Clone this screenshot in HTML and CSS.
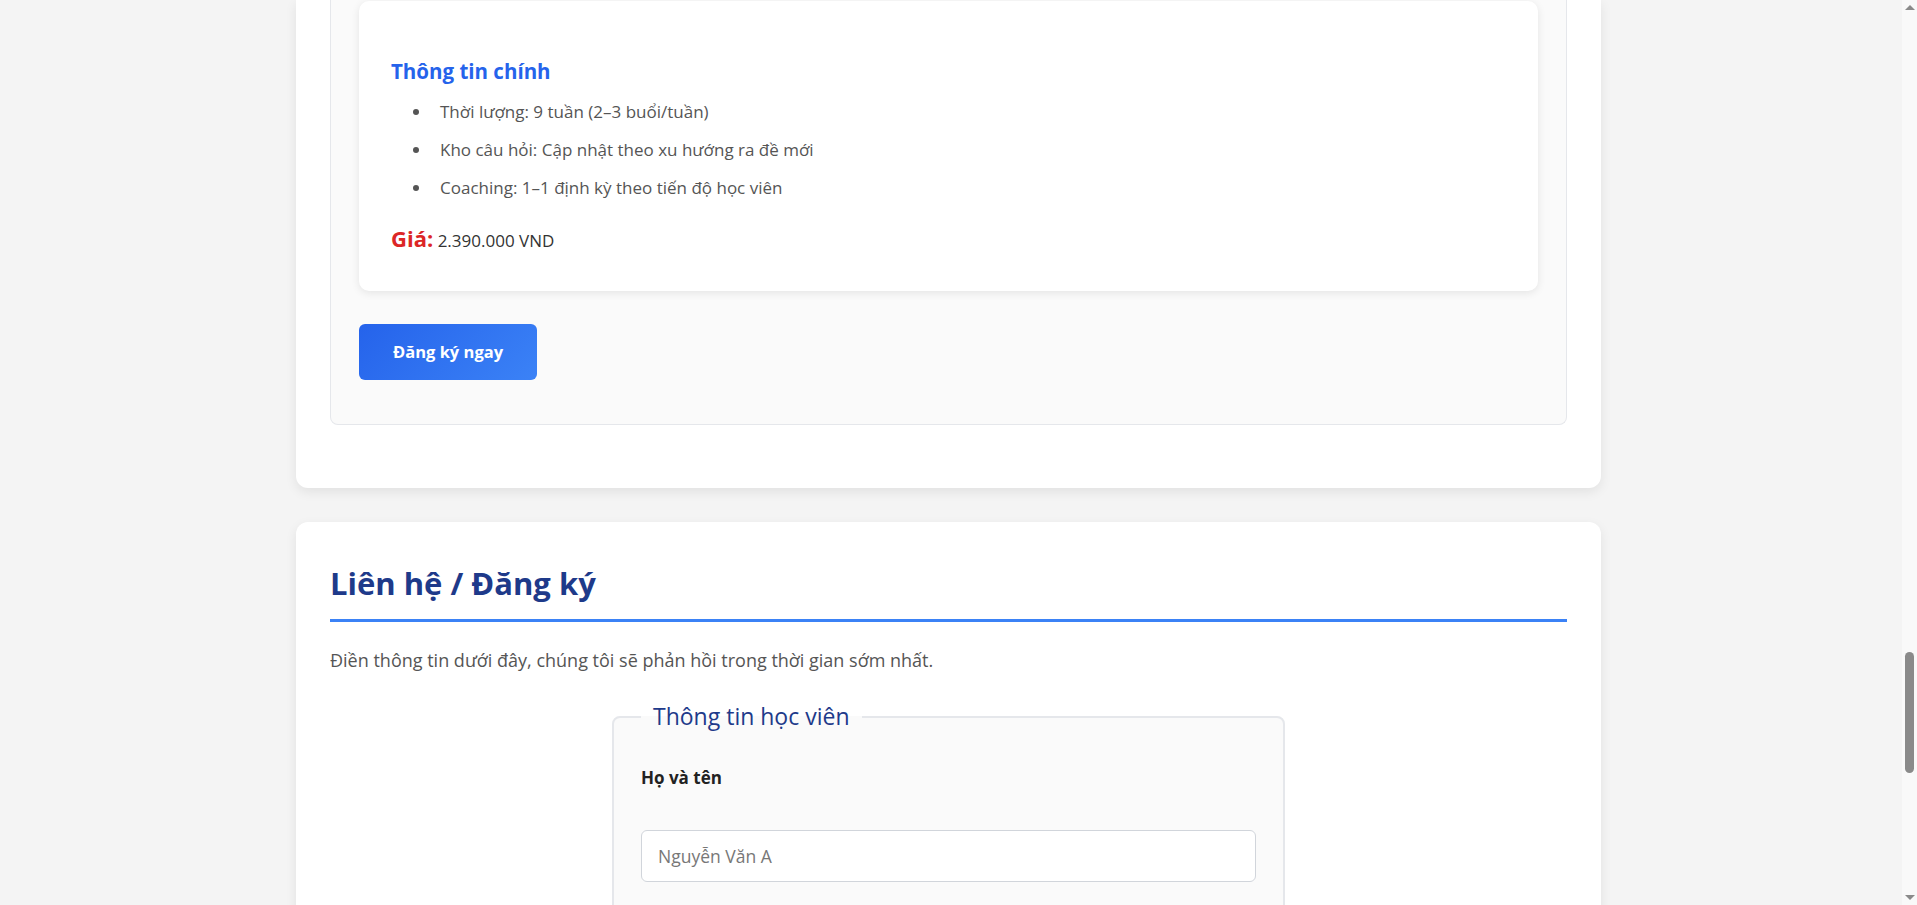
FILE: index.html
```html
<!DOCTYPE html>
<html lang="vi">
<head>
<meta charset="utf-8">
<title>Liên hệ / Đăng ký</title>
<link rel="stylesheet" href="styles.css">
</head>
<body>
<main class="page">
  <section class="card card-top">
    <div class="course">
      <div class="course-info">
        <h3 class="info-title">Thông tin chính</h3>
        <ul class="info-list">
          <li>Thời lượng: 9 tuần (2–3 buổi/tuần)</li>
          <li>Kho câu hỏi: Cập nhật theo xu hướng ra đề mới</li>
          <li>Coaching: 1–1 định kỳ theo tiến độ học viên</li>
        </ul>
        <p class="price"><strong>Giá:</strong> 2.390.000 VND</p>
      </div>
      <a class="btn" href="#lien-he">Đăng ký ngay</a>
    </div>
  </section>

  <section class="card card-contact" id="lien-he">
    <h2 class="section-title">Liên hệ / Đăng ký</h2>
    <p class="lead">Điền thông tin dưới đây, chúng tôi sẽ phản hồi trong thời gian sớm nhất.</p>
    <form class="form">
      <fieldset class="fieldset">
        <legend class="legend">Thông tin học viên</legend>
        <div class="field">
          <label class="label" for="name">Họ và tên</label>
          <input class="input" id="name" type="text" placeholder="Nguyễn Văn A">
        </div>
      </fieldset>
    </form>
  </section>
</main>

<div class="scrollbar" aria-hidden="true">
  <span class="sb-arrow sb-up"></span>
  <div class="sb-track"><span class="sb-thumb"></span></div>
  <span class="sb-arrow sb-down"></span>
</div>
</body>
</html>
```

FILE: styles.css
```css
* { box-sizing: border-box; }

html, body {
  margin: 0;
  padding: 0;
}

html { overflow: hidden; }

body {
  background: #f4f4f4;
  font-family: "Open Sans", "Noto Sans", "Liberation Sans", sans-serif;
  color: #333;
  padding-right: 20px;
}

.page {
  width: 1305px;
  margin: 0 auto;
  padding-bottom: 60px;
}

.card {
  background: #fff;
  border-radius: 12px;
  box-shadow: 0 4px 12px rgba(0, 0, 0, 0.08);
  padding: 42px 34px 40px;
}

.card-top {
  border-radius: 0 0 12px 12px;
  padding: 0 34px 63px;
}

.course {
  background: #fafafa;
  border: 1px solid #e5e7eb;
  border-top: none;
  border-radius: 0 0 8px 8px;
  padding: 1px 28px 44px;
}

.course-info {
  background: #fff;
  border-radius: 10px;
  box-shadow: 0 2px 8px rgba(0, 0, 0, 0.09);
  padding: 57px 32px 35px;
}

.info-title {
  margin: 0;
  font-size: 20.5px;
  line-height: 26px;
  font-weight: 700;
  color: #2563eb;
}

.info-list {
  margin: 15px 0 25px;
  padding-left: 41px;
  color: #555;
  font-size: 17px;
}

.info-list li {
  line-height: 26px;
  margin-bottom: 12px;
  padding-left: 8px;
}

.price {
  margin: 0;
  line-height: 30px;
  font-size: 17px;
  color: #333;
}

.price strong {
  color: #dc2626;
  font-size: 22px;
  line-height: 1;
}

.btn {
  display: inline-block;
  margin-top: 33px;
  padding: 16px 34px;
  line-height: 24px;
  font-size: 16.5px;
  font-weight: 700;
  color: #fff;
  text-decoration: none;
  border: none;
  border-radius: 6px;
  background: linear-gradient(135deg, #2563eb, #3b82f6);
  font-family: inherit;
}

.card-contact {
  margin-top: 34px;
}

.section-title {
  margin: 0;
  padding-bottom: 17px;
  border-bottom: 3px solid #3b82f6;
  font-size: 31px;
  line-height: 38px;
  font-weight: 700;
  color: #1e3a8a;
}

.lead {
  margin: 25px 0 28px;
  font-size: 18px;
  line-height: 27px;
  color: #555;
}

.form { margin: 0; }

.fieldset {
  width: 673px;
  margin: 0 auto;
  background: #fafafa;
  border: 2px solid #e5e7eb;
  border-radius: 8px;
  padding: 35px 27px 120px;
}

.legend {
  padding: 0 12px;
  font-size: 23px;
  line-height: 29px;
  font-weight: 500;
  color: #1e3a8a;
}

.label {
  display: block;
  font-size: 17px;
  line-height: 24px;
  font-weight: 700;
  color: #222;
  margin-bottom: 40px;
}

.input {
  display: block;
  width: 100%;
  height: 52px;
  padding: 0 16px;
  border: 1px solid #d1d5db;
  border-radius: 6px;
  background: #fff;
  font-family: inherit;
  font-size: 17.5px;
  color: #333;
}

.input::placeholder { color: #777; }

/* imitation of the window scrollbar seen in the screenshot */
.scrollbar {
  position: fixed;
  top: 0;
  right: 0;
  width: 15px;
  height: 100vh;
  background: #f9f9f9;
  display: flex;
  flex-direction: column;
  align-items: center;
}

.sb-arrow {
  flex: 0 0 auto;
  width: 0;
  height: 0;
  border-left: 5px solid transparent;
  border-right: 5px solid transparent;
  margin: 5px 0;
}

.sb-up { border-bottom: 5px solid #8a8a8a; }
.sb-down { border-top: 5px solid #8a8a8a; }

.sb-track {
  flex: 1;
  width: 100%;
  display: flex;
  justify-content: center;
  padding-top: 637px;
}

.sb-thumb {
  display: block;
  width: 9px;
  height: 121px;
  border-radius: 5px;
  background: #8a8a8a;
}
```
